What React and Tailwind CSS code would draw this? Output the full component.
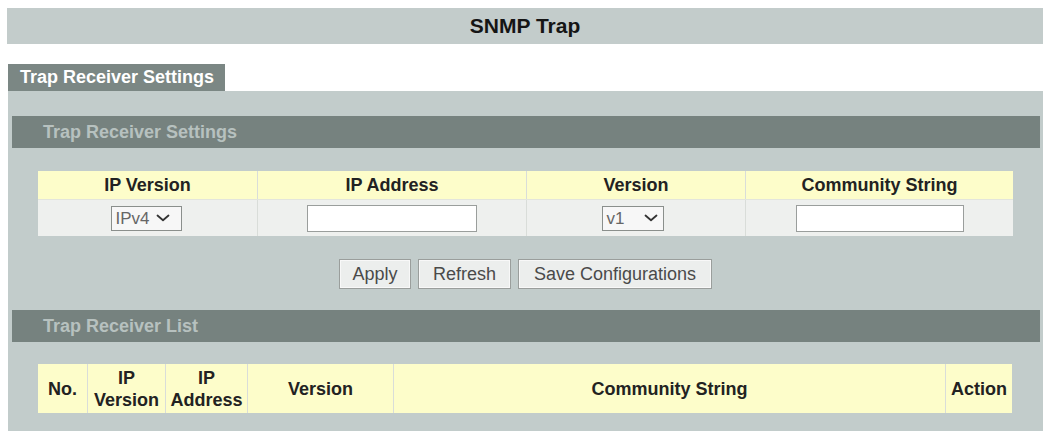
import React from "react";

function Chevron({ className }) {
  return (
    <svg className={className} width="14" height="8" viewBox="0 0 14 8" fill="none">
      <path d="M1.5 1.5 L7 6.2 L12.5 1.5" stroke="#333" strokeWidth="1.8" strokeLinecap="round" strokeLinejoin="round" />
    </svg>
  );
}

function FakeSelect({ value, width, gap }) {
  return (
    <div
      className={`flex h-[25px] items-center border border-[#8a8f8c] bg-[#f7f7f7] pl-[4px] text-[17px] leading-none text-[#666] ${width}`}
    >
      <span>{value}</span>
      <Chevron className={gap} />
    </div>
  );
}

function SectionHeader({ children }) {
  return (
    <div className="flex h-[32px] items-center bg-[#76827f] pl-[31px] text-[18px] font-bold text-[#b7c1bf]">
      {children}
    </div>
  );
}

function Button({ children, width }) {
  return (
    <button
      className={`h-[30px] border border-[#9a9e9c] bg-[#eceeed] text-[18px] text-[#4a4a4a] shadow-[inset_0_0_0_1px_#f8f8f8] ${width}`}
    >
      {children}
    </button>
  );
}

export default function App() {
  const cell = "border-r border-[#d9ddd9] last:border-r-0";
  return (
    <div
      className="flex h-[431px] w-[1043px] flex-col overflow-hidden bg-white"
      style={{ fontFamily: '"Liberation Sans", Arial, sans-serif' }}
    >
      {/* page title */}
      <div className="ml-[7px] mt-[8px] flex h-[36px] items-center justify-center bg-[#c3cccb] text-[21px] font-bold text-[#151515]">
        SNMP Trap
      </div>

      {/* tab */}
      <div className="ml-[8px] mt-[20px] flex h-[27px] w-[217px] items-center bg-[#7b8784] pl-[12px] text-[18px] font-bold text-white">
        Trap Receiver Settings
      </div>

      {/* panel */}
      <div className="ml-[8px] flex flex-1 flex-col bg-[#c2cccb] pl-[4px] pr-[3px] pt-[25px]">
        <SectionHeader>Trap Receiver Settings</SectionHeader>

        <div className="ml-[26px] mt-[23px] w-[975px]">
          <div className="grid h-[28px] grid-cols-[220px_269px_219px_267px] bg-[#fdfdca] text-[18px] font-bold text-[#222]">
            <div className={`flex items-center justify-center ${cell}`}>IP Version</div>
            <div className={`flex items-center justify-center ${cell}`}>IP Address</div>
            <div className={`flex items-center justify-center ${cell}`}>Version</div>
            <div className="flex items-center justify-center">Community String</div>
          </div>
          <div className="grid h-[37px] grid-cols-[220px_269px_219px_267px] border-t border-[#e3e5dc] bg-[#eef0ee]">
            <div className={`flex items-center justify-center pr-[3px] ${cell}`}>
              <FakeSelect value="IPv4" width="w-[71px]" gap="ml-[6px]" />
            </div>
            <div className={`flex items-center justify-center ${cell}`}>
              <div className="h-[27px] w-[170px] border border-[#9a9e9c] bg-white" />
            </div>
            <div className={`flex items-center justify-center pr-[7px] ${cell}`}>
              <FakeSelect value="v1" width="w-[62px]" gap="ml-[20px]" />
            </div>
            <div className="flex items-center justify-center">
              <div className="h-[27px] w-[168px] border border-[#9a9e9c] bg-white" />
            </div>
          </div>
        </div>

        <div className="ml-[26px] mt-[23px] flex w-[975px] justify-center gap-[7px]">
          <Button width="w-[72px]">Apply</Button>
          <Button width="w-[93px]">Refresh</Button>
          <Button width="w-[194px]">Save Configurations</Button>
        </div>

        <div className="mt-[21px]">
          <SectionHeader>Trap Receiver List</SectionHeader>
        </div>

        <div className="ml-[26px] mt-[22px] grid h-[49px] w-[974px] grid-cols-[50px_78px_82px_146px_552px_66px] bg-[#fdfdca] text-[18px] font-bold leading-[22px] text-[#222]">
          <div className={`flex items-center justify-center ${cell}`}>No.</div>
          <div className={`flex items-center justify-center text-center ${cell}`}>
            IP
            <br />
            Version
          </div>
          <div className={`flex items-center justify-center text-center ${cell}`}>
            IP
            <br />
            Address
          </div>
          <div className={`flex items-center justify-center ${cell}`}>Version</div>
          <div className={`flex items-center justify-center ${cell}`}>Community String</div>
          <div className="flex items-center justify-center">Action</div>
        </div>
      </div>
    </div>
  );
}
